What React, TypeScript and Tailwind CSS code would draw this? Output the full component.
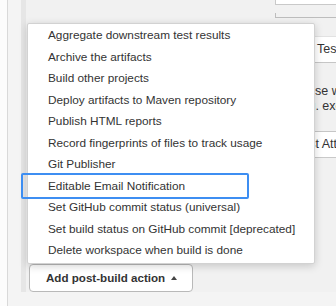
const items = [
  "Aggregate downstream test results",
  "Archive the artifacts",
  "Build other projects",
  "Deploy artifacts to Maven repository",
  "Publish HTML reports",
  "Record fingerprints of files to track usage",
  "Git Publisher",
  "Editable Email Notification",
  "Set GitHub commit status (universal)",
  "Set build status on GitHub commit [deprecated]",
  "Delete workspace when build is done",
];

const dotted =
  "bg-[#f1f1f1] bg-[radial-gradient(circle,#e3e3e3_0.6px,transparent_0.7px)] bg-[length:2px_2px]";

export default function App() {
  return (
    <div
      className="relative flex h-[306px] w-[336px] overflow-hidden bg-[#f4f4f4] text-[#333]"
      style={{ fontFamily: '"Liberation Sans", Arial, sans-serif' }}
    >
      {/* left gutter */}
      <div className="w-[8px] shrink-0 border-r border-[#d9d9d9] bg-[#fcfcfc]" />
      <div className="w-[13px] shrink-0" />

      <div className="flex flex-1 flex-col">
        {/* post-build panel */}
        <div className={`flex h-[292px] border-l-[5px] border-[#e6e6e6] ${dotted}`}>
          <div className="flex w-[249px] shrink-0 flex-col justify-end">
            <button className="ml-[3px] flex h-[28px] w-[164px] items-center rounded-[4px] border border-[#b9b9b9] bg-white pl-[16px] text-[11.6px] font-bold text-[#333]">
              Add post-build action
              <span className="ml-[6px] h-0 w-0 border-x-[3.5px] border-b-[4px] border-x-transparent border-b-[#444]" />
            </button>
          </div>

          {/* config fields partly hidden behind the menu */}
          <div className="flex min-w-0 flex-1 flex-col overflow-hidden text-[12.5px]">
            <div className="h-[5px] border-b border-l border-[#c9c9c9] bg-white" />
            <div className="mt-[8px] h-[5px] border-b border-l border-[#bdbdbd]" />
            <div className="mt-[18px] flex h-[27px] items-center overflow-hidden border-t border-b border-t-[#e2e2e2] border-b-[#c6c6c6] bg-white pl-[42px] whitespace-nowrap">
              Test Report
            </div>
            <div className="flex h-[68px] flex-col overflow-hidden whitespace-nowrap pl-[33px] pt-[21px] leading-[15px]">
              <span>use wildcards</span>
              <span className="-ml-[10px]">e.g. exclude</span>
            </div>
            <div className="flex h-[27px] items-center overflow-hidden border-t border-b border-t-[#c6c6c6] border-b-[#c9c9c9] bg-white pl-[21px] whitespace-nowrap">
              Test Attachments
            </div>
          </div>
        </div>
      </div>

      {/* dropdown menu */}
      <div className="absolute left-[27px] top-[23px] w-[288px] rounded-[2px] border border-[#d2d2d2] bg-white pt-[1px] pb-[1px] shadow-[0_2px_8px_rgba(0,0,0,0.18)]">
        {items.map((label, i) => (
          <div
            key={label}
            className="relative h-[21.5px] whitespace-nowrap pl-[20px] text-[11.8px] leading-[21.5px] text-[#333]"
          >
            {label}
            {i === 7 && (
              <div className="absolute -left-[7px] -top-[2.5px] h-[26px] w-[228px] rounded-[2px] border-2 border-[#3d8ef2]" />
            )}
          </div>
        ))}
      </div>
    </div>
  );
}
